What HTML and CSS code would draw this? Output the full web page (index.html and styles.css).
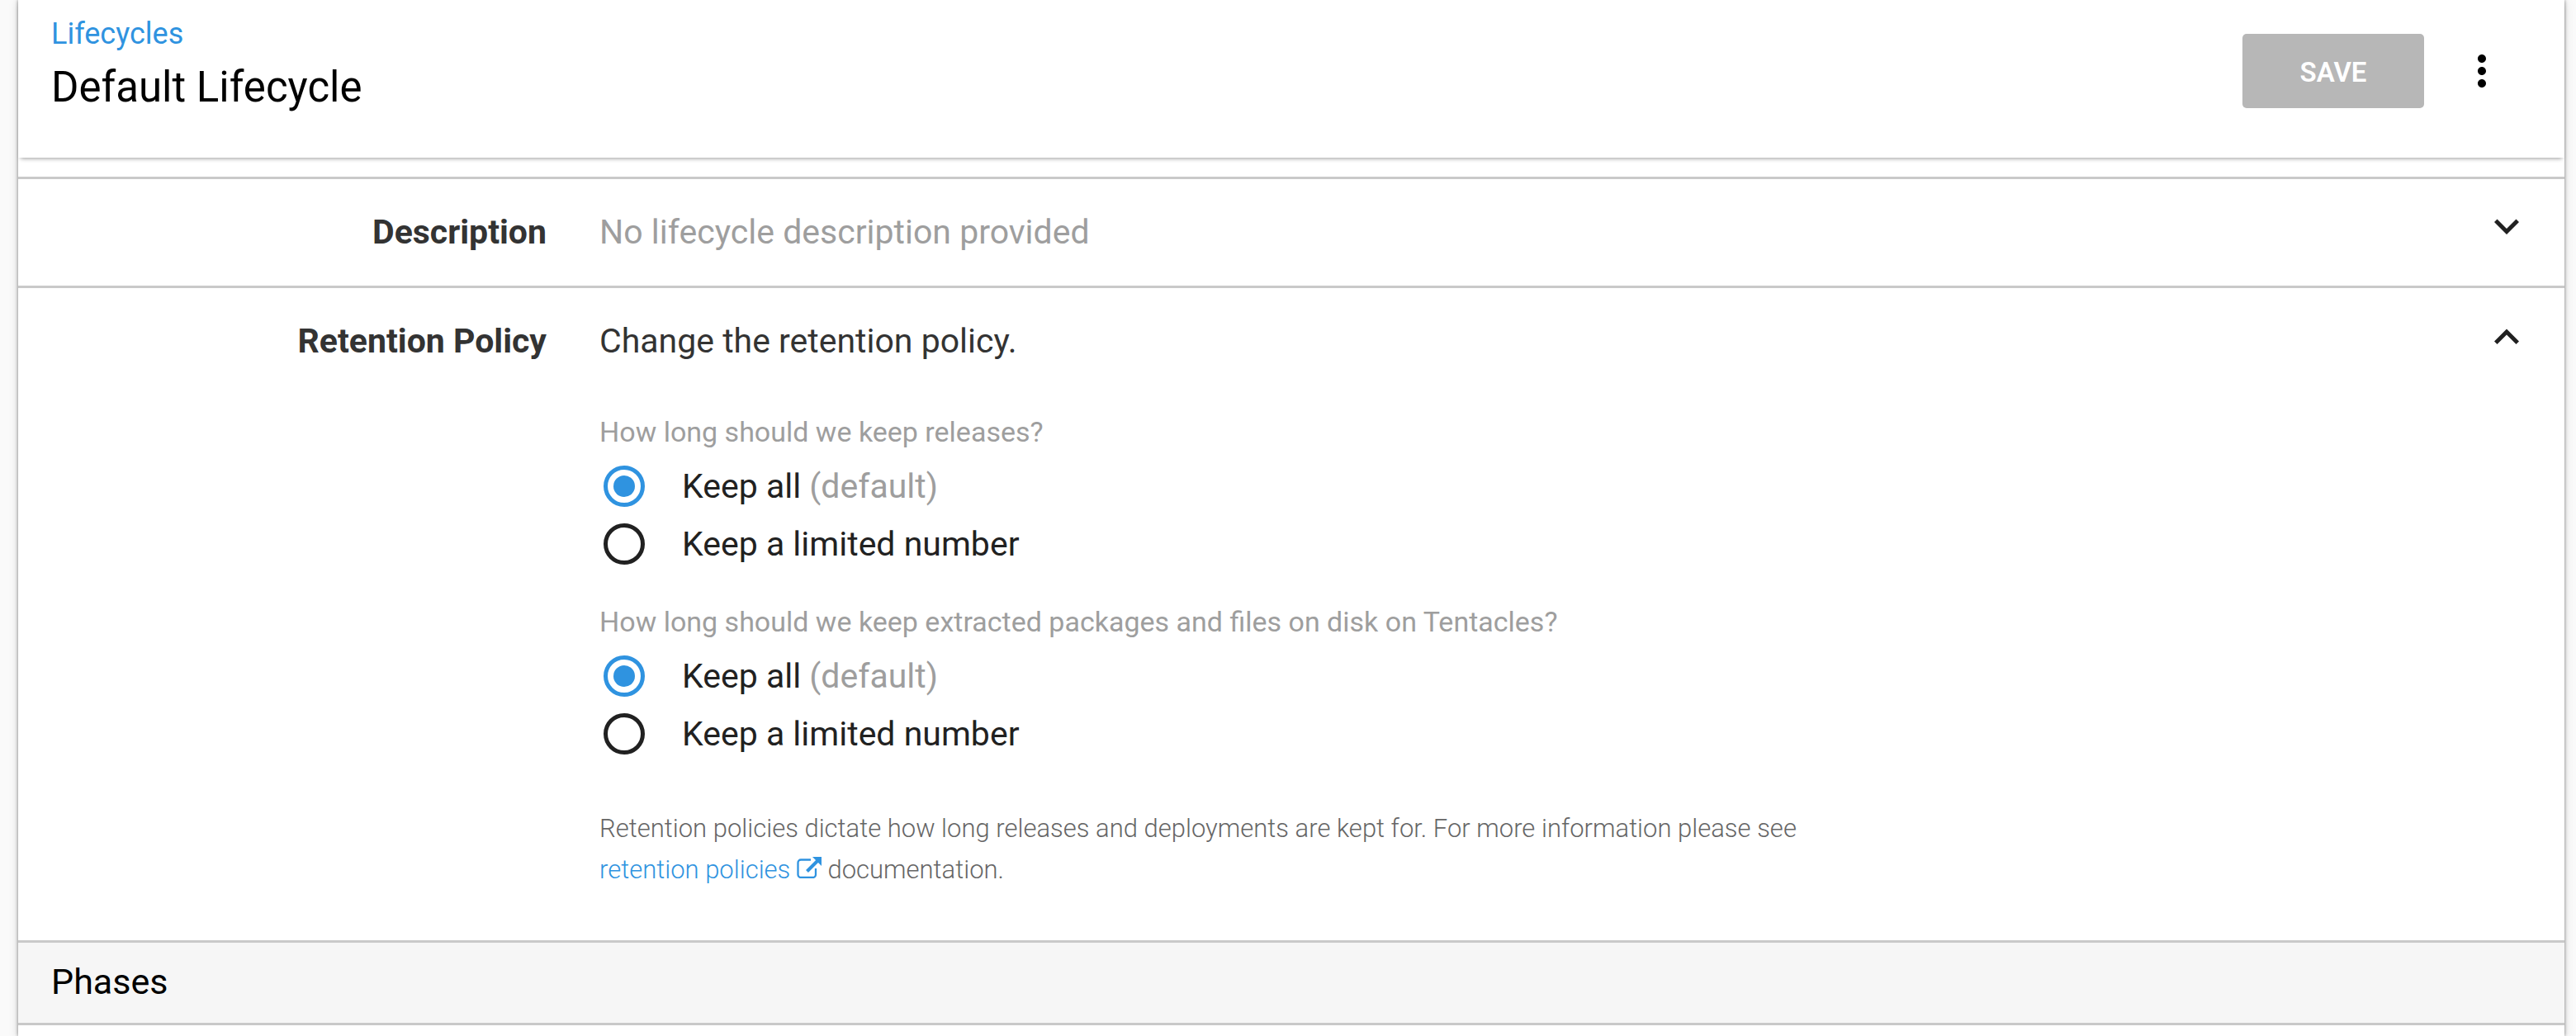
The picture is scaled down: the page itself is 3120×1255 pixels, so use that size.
FILE: index.html
```html
<!DOCTYPE html>
<html lang="en">
<head>
  <meta charset="utf-8">
  <meta name="viewport" content="width=device-width, initial-scale=1">
  <title>Default Lifecycle</title>
  <link rel="stylesheet" href="styles.css">
</head>
<body>
  <main class="card">
    <header class="card-header">
      <div class="titles">
        <a class="breadcrumb" href="#">Lifecycles</a>
        <h1 class="page-title">Default Lifecycle</h1>
      </div>
      <div class="actions">
        <button class="save" type="button" disabled>SAVE</button>
        <button class="icon-button" type="button" aria-label="More actions">
          <svg class="icon" viewBox="0 0 24 24" aria-hidden="true"><path d="M12 8c1.100 0 2-.9 2-2s-.9-2-2-2-2 .9-2 2 .9 2 2 2zm0 2c-1.100 0-2 .9-2 2s.9 2 2 2 2-.9 2-2-.9-2-2-2zm0 6c-1.100 0-2 .9-2 2s.9 2 2 2 2-.9 2-2-.9-2-2-2z"/></svg>
        </button>
      </div>
    </header>

    <section class="row">
      <h2 class="row-label">Description</h2>
      <div class="row-body">
        <p class="summary muted">No lifecycle description provided</p>
      </div>
      <button class="icon-button chevron" type="button" aria-label="Expand description" aria-expanded="false">
        <svg class="icon" viewBox="0 0 24 24" aria-hidden="true"><path d="M16.590 8.590L12 13.170 7.410 8.590 6 10l6 6 6-6z"/></svg>
      </button>
    </section>

    <section class="row">
      <h2 class="row-label">Retention Policy</h2>
      <div class="row-body">
        <p class="summary">Change the retention policy.</p>
        <fieldset class="question">
          <legend class="question-title">How long should we keep releases?</legend>
          <label class="option"><input class="radio" type="radio" name="releases" checked><span>Keep all <span class="muted">(default)</span></span></label>
          <label class="option"><input class="radio" type="radio" name="releases"><span>Keep a limited number</span></label>
        </fieldset>
        <fieldset class="question">
          <legend class="question-title">How long should we keep extracted packages and files on disk on Tentacles?</legend>
          <label class="option"><input class="radio" type="radio" name="files" checked><span>Keep all <span class="muted">(default)</span></span></label>
          <label class="option"><input class="radio" type="radio" name="files"><span>Keep a limited number</span></label>
        </fieldset>
        <p class="note">Retention policies dictate how long releases and deployments are kept for. For more information please see <a class="note-link" href="#">retention policies <svg class="external" viewBox="0 0 30 26" aria-hidden="true"><path d="M17 3.500H5A3.500 3.500 0 0 0 1.500 7v14.500A3.500 3.500 0 0 0 5 25h14.500a3.500 3.500 0 0 0 3.500-3.500V14" fill="none" stroke="currentColor" stroke-width="2.300"/><path d="M12.500 17.500L26 4" fill="none" stroke="currentColor" stroke-width="4"/><path d="M19 0h11v11z" fill="currentColor"/></svg></a> documentation.</p>
      </div>
      <button class="icon-button chevron" type="button" aria-label="Collapse retention policy" aria-expanded="true">
        <svg class="icon" viewBox="0 -1 24 24" aria-hidden="true"><path d="M12 8l-6 6 1.410 1.410L12 10.830l4.590 4.580L18 14z"/></svg>
      </button>
    </section>

    <h2 class="group-title">Phases</h2>
  </main>
</body>
</html>
```
FILE: styles.css
```css
* {
  box-sizing: border-box;
}

body {
  margin: 0;
  background: #fafafa;
  color: #333;
  font-family: Roboto, "Liberation Sans", sans-serif;
  font-size: 41px;
  line-height: 50px;
}

h1, h2, p, fieldset, legend {
  margin: 0;
  padding: 0;
  border: 0;
}

a {
  color: #2f93e0;
  text-decoration: none;
}

button {
  padding: 0;
  border: 0;
  background: none;
  font: inherit;
}

.card {
  min-height: 100vh;
  margin: 0 14px 0 22px;
  background: #fff;
  box-shadow: 0 0 4px rgba(0, 0, 0, 0.5), 0 2px 12px rgba(0, 0, 0, 0.12);
}

.card-header {
  display: flex;
  justify-content: space-between;
  align-items: flex-start;
  margin-bottom: 23px;
  padding: 16px 70px 55px 40px;
  box-shadow: 0 4px 5px -3px rgba(0, 0, 0, 0.4);
}

.breadcrumb {
  display: block;
  font-size: 36px;
}

.page-title {
  padding-top: 10px;
  color: #000;
  font-size: 51px;
  font-weight: 400;
  line-height: 60px;
}

.actions {
  display: flex;
  align-items: center;
  gap: 40px;
  padding-top: 25px;
}

.save {
  width: 220px;
  height: 90px;
  padding-top: 4px;
  border-radius: 5px;
  background: #b7b7b7;
  color: #fff;
  font-size: 33px;
  font-weight: 600;
}

.icon-button {
  flex: none;
  width: 60px;
  height: 60px;
  color: #000;
}

.icon {
  display: block;
  width: 60px;
  height: 60px;
  fill: currentColor;
}

.row {
  display: flex;
  align-items: flex-start;
  padding: 39px 40px 40px;
  border-top: 3px solid #c9c9c9;
}

.row-label {
  flex: none;
  width: 600px;
  font-size: 41px;
  font-weight: 700;
  text-align: right;
}

.row-body {
  flex: 1;
  padding-left: 64px;
}

.muted {
  color: #9e9e9e;
}

.chevron {
  margin-top: -12px;
  color: #212121;
}

.question {
  margin-top: 60px;
}

.question + .question {
  margin-top: 34px;
}

.question-title {
  padding-bottom: 6px;
  color: #9e9e9e;
  font-size: 34px;
}

.option {
  display: flex;
  align-items: center;
  gap: 45px;
  height: 70px;
  padding-left: 5px;
  color: #212121;
}

.radio {
  display: grid;
  place-content: center;
  appearance: none;
  width: 50px;
  height: 50px;
  margin: 0;
  border: 5px solid #212121;
  border-radius: 50%;
}

.radio:checked {
  border-color: #2f93e0;
}

.radio:checked::before {
  width: 26px;
  height: 26px;
  border-radius: 50%;
  background: #2f93e0;
  content: "";
}

.note {
  max-width: 1500px;
  padding: 55px 0 20px;
  color: #666;
  font-size: 31px;
  font-weight: 300;
}

.external {
  width: 30px;
  height: 26px;
}

.group-title {
  padding: 22px 40px 25px;
  border: solid #c9c9c9;
  border-width: 3px 0;
  background: #f6f6f6;
  color: #000;
  font-size: 43px;
  font-weight: 400;
}
```
